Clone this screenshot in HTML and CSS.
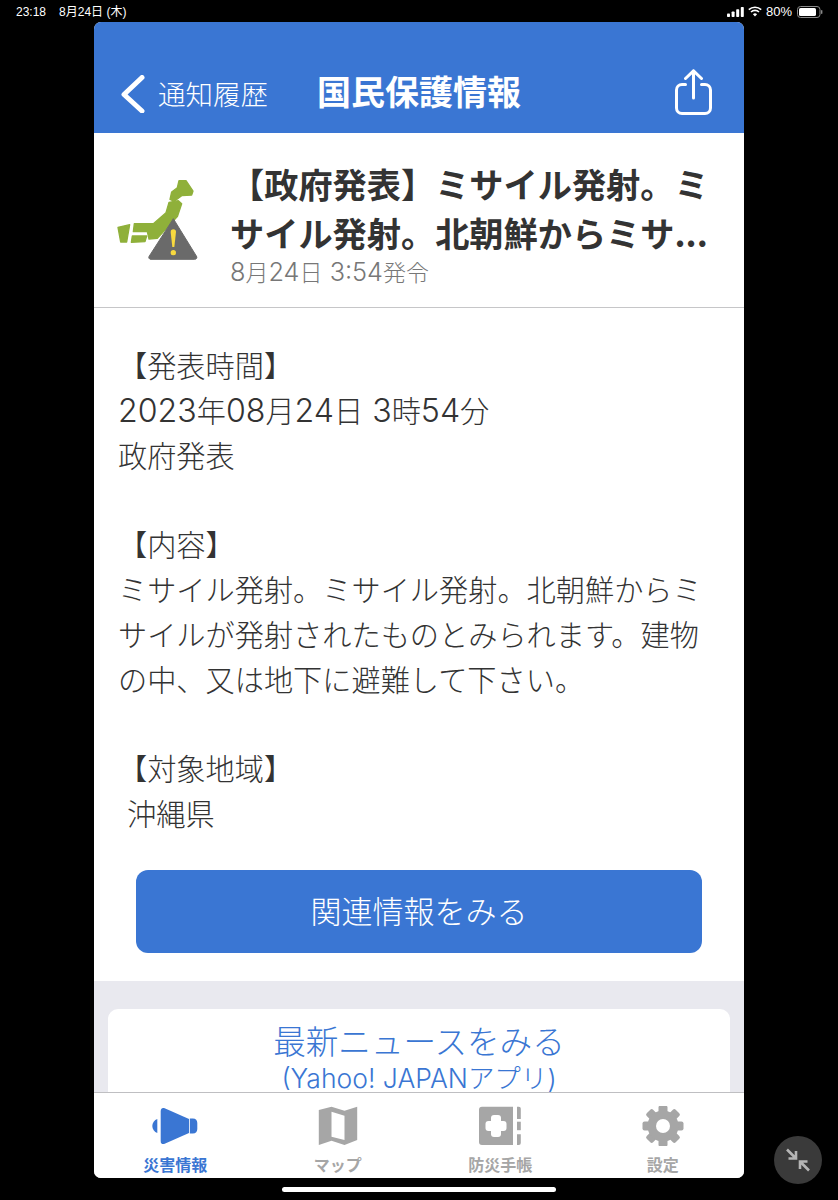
FILE: index.html
```html
<!DOCTYPE html>
<html lang="ja">
<head>
  <meta charset="UTF-8" />
  <meta name="viewport" content="width=device-width, initial-scale=1.0">
  <title>国民保護情報</title>
  <link rel="stylesheet" href="styles.css">
</head>
<body>
  <div class="status-bar">
    <div class="status-left">
      <span>23:18</span>
      <span>8月24日 (木)</span>
    </div>
    <div class="status-right">
      <svg class="signal" width="17" height="10" viewBox="0 0 17 10">
        <rect x="0" y="6.5" width="3" height="3.5" rx="0.8" />
        <rect x="4.6" y="4.5" width="3" height="5.5" rx="0.8" />
        <rect x="9.2" y="2.2" width="3" height="7.8" rx="0.8" />
        <rect x="13.8" y="0" width="3" height="10" rx="0.8" />
      </svg>
      <svg class="wifi" width="14" height="11" viewBox="0 0 14 11" fill="none" stroke="#fff" stroke-width="1.6">
        <path d="M0.8 3.7a9 9 0 0 1 12.4 0" />
        <path d="M3 6a5.8 5.8 0 0 1 8 0" />
        <path d="M7 10.6 4.9 8.3a3 3 0 0 1 4.2 0z" fill="#fff" stroke="none" />
      </svg>
      <span class="battery-pct">80%</span>
      <svg class="battery" width="26" height="12" viewBox="0 0 26 12">
        <rect x="0.5" y="0.5" width="22.5" height="11" rx="3" fill="none" stroke="#8a8a8a" />
        <rect x="2" y="2" width="17" height="8" rx="1.6" fill="#fff" />
        <rect x="24" y="4" width="1.4" height="4" rx="0.7" fill="#8a8a8a" />
      </svg>
    </div>
  </div>

  <div class="app">
    <header class="nav">
      <a class="nav-back">
        <svg width="24" height="38" viewBox="0 0 24 38" fill="none" stroke="#fff" stroke-width="5" stroke-linecap="round" stroke-linejoin="round">
          <path d="M21 2.5 3 19.5l18 16.5" />
        </svg>
        <span>通知履歴</span>
      </a>
      <h1>国民保護情報</h1>
      <div class="nav-share">
        <svg width="37" height="46" viewBox="0 0 37 46" fill="none" stroke="#fff" stroke-width="3" stroke-linecap="round" stroke-linejoin="round">
          <path d="M10.500 15.500H7a5.500 5.500 0 0 0-5.500 5.500v18A5.500 5.500 0 0 0 7 44.500h23a5.500 5.500 0 0 0 5.500-5.500V21a5.500 5.500 0 0 0-5.500-5.500h-3.500" />
          <path d="M18.500 29V2" />
          <path d="M10.500 9.500 18.500 1.800l8 7.700" />
        </svg>
      </div>
    </header>

    <main class="scroll">
      <section class="alert-head">
        <svg class="alert-icon" width="105" height="100" viewBox="0 0 315 300">
          <g fill="#8fb03a" stroke="#8fb03a" stroke-width="4" stroke-linejoin="round">
            <path d="M222 32h21l21 31-4 12-30 2-22 17-13-6 5-22 17-13z" />
            <path d="M192 97l28-5 10 9-13 39-60 65-25 2-5-22H85l3-24 57 0 38-33z" />
            <path d="M39 172l35-8-9 52H47z" />
            <path d="M82 198h43l-5 17-41 2z" />
          </g>
          <path d="M205 146 274 258a6 6 0 0 1-5 10H138a6 6 0 0 1-5-10z" fill="#6a6a6a" stroke="#6a6a6a" stroke-width="3" stroke-linejoin="round" />
          <path d="M197 186a8 8 0 0 1 16 0l-5 45h-6z" fill="#f8d93f" />
          <circle cx="205" cy="248" r="8" fill="#f8d93f" />
        </svg>
        <div class="alert-text">
          <h2>【政府発表】ミサイル発射。ミサイル発射。北朝鮮からミサ...</h2>
          <p class="alert-date"><span class="num">8</span>月<span class="num">24</span>日<span class="num"> 3:54</span>発令</p>
        </div>
      </section>

      <section class="alert-body">
        <p class="message">【発表時間】
<span class="num">2023</span>年<span class="num">08</span>月<span class="num">24</span>日<span class="num"> 3</span>時<span class="num">54</span>分
政府発表

【内容】
ミサイル発射。ミサイル発射。北朝鮮からミサイルが発射されたものとみられます。建物の中、又は地下に避難して下さい。

【対象地域】
<span class="num"> </span>沖縄県</p>
        <a class="btn-related">関連情報をみる</a>
      </section>

      <section class="news">
        <a class="news-card">
          <span class="news-main">最新ニュースをみる</span>
          <span class="news-sub"><span class="latin">(Yahoo! JAPAN</span>アプリ<span class="latin">)</span></span>
        </a>
      </section>
    </main>

    <nav class="tabbar">
      <a class="tab active">
        <svg width="48" height="40" viewBox="0 0 48 40" fill="#3a76d3">
          <path d="M9.700 5c0-3 2-3.500 4-2.800L38 13v14L13.700 37.800c-2 .7-4 .2-4-2.800z" />
          <path d="M6.300 13c-3 1-5 4-5 7s2 6 5 7z" />
          <path d="M38.800 12.500h3c3 0 4.500 2 4.500 4.500v6c0 2.500-1.500 4.500-4.500 4.500h-3z" />
        </svg>
        <span>災害情報</span>
      </a>
      <a class="tab">
        <svg width="48" height="40" viewBox="0 0 48 40">
          <path fill-rule="evenodd" fill="#a6a6a6" d="M4.800 4 17.500.7l13 4 12.700-4V34l-12.700 5-13-4.300L4.800 39zM17.500 5.700v25l13 3.300V9.700z" />
        </svg>
        <span>マップ</span>
      </a>
      <a class="tab">
        <svg width="48" height="40" viewBox="0 0 48 40" fill="#a6a6a6">
          <path d="M6 .7h31V39H6a3 3 0 0 1-3-3V3.700a3 3 0 0 1 3-3z" />
          <rect x="15" y="9" width="10" height="22" rx="3" fill="#fff" />
          <rect x="9.500" y="15" width="21" height="10" rx="3" fill="#fff" />
          <path d="M41 .7h1.800a2 2 0 0 1 2 2V13H41z" />
          <rect x="41" y="15.700" width="3.800" height="8.500" />
          <path d="M41 28.300h3.800V37a2 2 0 0 1-2 2H41z" />
        </svg>
        <span>防災手帳</span>
      </a>
      <a class="tab">
        <svg width="48" height="40" viewBox="-24 -20 48 40" fill="#a6a6a6">
          <rect x="-4.500" y="-20.500" width="9" height="41" rx="2" />
          <rect x="-4.500" y="-20.500" width="9" height="41" rx="2" transform="rotate(45)" />
          <rect x="-4.500" y="-20.500" width="9" height="41" rx="2" transform="rotate(90)" />
          <rect x="-4.500" y="-20.500" width="9" height="41" rx="2" transform="rotate(135)" />
          <circle r="15.500" />
          <circle r="7" fill="#fff" />
        </svg>
        <span>設定</span>
      </a>
    </nav>
  </div>

  <div class="home-area"><div class="home-indicator"></div></div>

  <button class="float-btn" type="button">
    <svg width="26" height="26" viewBox="0 0 26 26" fill="none" stroke="#b5b5b5" stroke-width="2.600">
      <path d="M2 2.500 11 11.500M3.500 11.500h7.500V4" />
      <path d="M24 23.500 15 14.500M22.500 14.500H15V22" />
    </svg>
  </button>
</body>
</html>
```

FILE: styles.css
```css
* {
  box-sizing: border-box;
}
html,
body {
  height: 100%;
}
body {
  margin: 0;
  background-color: #000;
  color: #333;
  font-family: "Noto Sans CJK JP", "Noto Sans", sans-serif;
  overflow: hidden;
}

/* status bar */
.status-bar {
  display: flex;
  justify-content: space-between;
  align-items: center;
  height: 22px;
  padding: 1px 15px 0 16px;
  color: #fff;
  font-family: "Liberation Sans", "Noto Sans CJK JP", sans-serif;
  font-size: 12px;
  line-height: 16px;
}
.status-left {
  display: flex;
  align-items: baseline;
  gap: 13px;
}
.status-right {
  display: flex;
  align-items: center;
  gap: 4px;
}
.signal {
  fill: #fff;
}
.battery-pct {
  font-size: 13px;
  margin-right: 1px;
}

/* app window */
.app {
  display: flex;
  flex-direction: column;
  width: 650px;
  height: 1156px;
  margin: 0 auto;
  background: #fff;
  border-radius: 7px;
  overflow: hidden;
}
.nav {
  display: grid;
  grid-template-columns: 1fr auto 1fr;
  align-items: center;
  flex: none;
  height: 111px;
  padding: 32px 27px 0;
  background-color: #3a76d3;
  color: #fff;
}
.nav h1 {
  margin: -5px 0 0;
  font-size: 34px;
  font-weight: 700;
  line-height: 46px;
}
.nav-back {
  display: flex;
  align-items: center;
  gap: 13px;
  font-size: 27.5px;
  font-weight: 300;
}
.nav-back span {
  margin-top: -2px;
}
.nav-share {
  display: flex;
  justify-content: flex-end;
  margin: -4px 5px 0 0;
}

.scroll {
  flex: 1;
  min-height: 0;
  overflow: hidden;
}

/* latin runs use a lighter face so they sit with the kana */
.num {
  font-family: Inter, "Liberation Sans", sans-serif;
  font-size: 1.1em;
  font-weight: 300;
  line-height: 0;
}
.latin {
  font-family: Inter, "Liberation Sans", sans-serif;
  font-weight: 300;
}

/* alert title */
.alert-head {
  display: flex;
  height: 175px;
  padding: 26px 32px 0 11px;
  border-bottom: 1px solid #c6c6c8;
}
.alert-icon {
  flex: none;
  margin: 11px 20px 0 0;
}
.alert-text {
  min-width: 0;
}
.alert-text h2 {
  margin: 0;
  font-size: 34.2px;
  font-weight: 700;
  line-height: 49px;
}
.alert-date {
  margin: -1px 0 0;
  color: #777;
  font-size: 23px;
  font-weight: 300;
  line-height: 30px;
}

/* alert message */
.alert-body {
  padding: 34px 24px 28px;
}
.message {
  margin: 0;
  font-size: 29.2px;
  font-weight: 300;
  line-height: 44.8px;
  white-space: pre-wrap;
}
.btn-related {
  display: flex;
  justify-content: center;
  align-items: center;
  height: 83px;
  margin: 35px 18px 0;
  padding-bottom: 4px;
  border-radius: 12px;
  background-color: #3a76d3;
  color: #fff;
  font-size: 31px;
  font-weight: 300;
}

/* news link */
.news {
  height: 200px;
  padding: 28px 14px 0;
  background-color: #e9e9ef;
}
.news-card {
  display: flex;
  flex-direction: column;
  align-items: center;
  height: 160px;
  padding-top: 9px;
  border-radius: 10px;
  background: #fff;
  color: #3a76d3;
  font-weight: 300;
}
.news-main {
  font-size: 32.6px;
  line-height: 44px;
}
.news-sub {
  font-size: 26.5px;
  line-height: 30px;
}

/* tabs */
.tabbar {
  display: flex;
  flex: none;
  height: 86px;
  border-top: 1px solid #bfbfc2;
  background: #fff;
}
.tab {
  display: flex;
  flex: 1;
  flex-direction: column;
  align-items: center;
  padding-top: 13px;
  color: #a6a6a6;
  font-size: 16px;
  font-weight: 700;
}
.tab span {
  margin-top: 7px;
  line-height: 22px;
}
.tab.active {
  color: #3a76d3;
}

.home-area {
  display: flex;
  justify-content: center;
  padding-top: 9px;
}
.home-indicator {
  width: 274px;
  height: 5px;
  border-radius: 3px;
  background: #fff;
}

/* assistive button, sits over the corner of the screen */
.float-btn {
  position: fixed;
  left: 774px;
  top: 1136px;
  display: flex;
  justify-content: center;
  align-items: center;
  width: 48px;
  height: 48px;
  padding: 0;
  border: none;
  border-radius: 50%;
  background-color: #3a3a3a;
}
```
